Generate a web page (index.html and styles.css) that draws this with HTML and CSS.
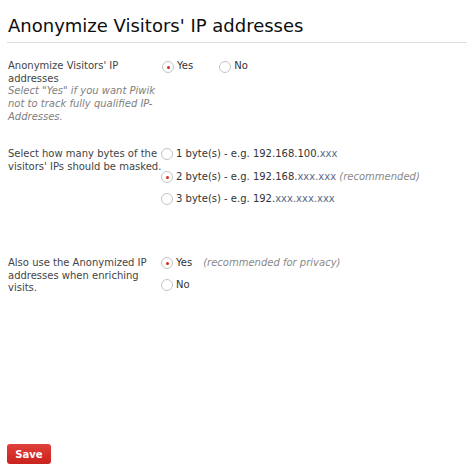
FILE: index.html
```html
<!DOCTYPE html>
<html lang="en">
<head>
  <meta charset="UTF-8">
  <title>Privacy Settings</title>
  <link rel="stylesheet" href="styles.css">
</head>
<body>

  <div class="privacy-box">
    <h2>Anonymize Visitors' IP addresses</h2>

    <div class="form-row">
      <div class="form-label">
        Anonymize Visitors' IP addresses
        <span class="form-help">Select "Yes" if you want Piwik not to track fully qualified IP-Addresses.</span>
      </div>
      <div class="form-field inline">
        <label class="radio"><span class="dot checked"></span>Yes</label>
        <label class="radio"><span class="dot"></span>No</label>
      </div>
    </div>

    <div class="form-row bytes">
      <div class="form-label">Select how many bytes of the visitors' IPs should be masked.</div>
      <div class="form-field">
        <label class="radio"><span class="dot"></span>1 byte(s) - e.g. 192.168.100.<span class="masked">xxx</span></label>
        <label class="radio"><span class="dot checked"></span>2 byte(s) - e.g. 192.168.<span class="masked">xxx.xxx</span>&nbsp;<em class="hint">(recommended)</em></label>
        <label class="radio"><span class="dot"></span>3 byte(s) - e.g. 192.<span class="masked">xxx.xxx.xxx</span></label>
      </div>
    </div>

    <div class="form-row enrich">
      <div class="form-label">Also use the Anonymized IP addresses when enriching visits.</div>
      <div class="form-field">
        <label class="radio"><span class="dot checked"></span>Yes <em class="hint note">(recommended for privacy)</em></label>
        <label class="radio"><span class="dot"></span>No</label>
      </div>
    </div>

    <button class="btn-save">Save</button>
  </div>

</body>
</html>
```

FILE: styles.css
```css
body {
  margin: 0;
  background: #fff;
  font-family: "DejaVu Sans", Verdana, sans-serif;
  font-size: 10px;
  color: #444;
}
.privacy-box {
  padding: 0 0 0 7px;
}
.privacy-box h2 {
  margin: 15px 0 0;
  padding: 0 0 5px 1px;
  font-size: 18px;
  font-weight: normal;
  color: #0d0d0d;
  line-height: 22px;
  border-bottom: 1px solid #ddd;
}
.form-row {
  display: grid;
  grid-template-columns: 154px 1fr;
  margin-top: 17px;
  line-height: 12.7px;
}
.form-row.bytes {
  margin-top: 24.4px;
}
.form-row.enrich {
  margin-top: 51px;
}
.form-label {
  padding-left: 1px;
  margin-right: -7px;
}
.form-help {
  display: block;
  font-style: italic;
  color: #808080;
}
.form-field {
  display: flex;
  flex-direction: column;
  gap: 9.5px;
}
.enrich .form-field {
  gap: 9px;
}
.form-field.inline {
  flex-direction: row;
  gap: 26px;
  padding-left: 1px;
}
.radio {
  display: flex;
  align-items: center;
  height: 13px;
  color: #333;
}
.dot {
  box-sizing: border-box;
  width: 12px;
  height: 12px;
  margin-right: 3px;
  border: 1px solid #c4c4c4;
  border-radius: 50%;
  background: #fff;
  position: relative;
}
.dot.checked::after {
  content: "";
  position: absolute;
  left: 4px;
  top: 4px;
  width: 3px;
  height: 3px;
  border-radius: 50%;
  background: #d4291f;
}
.masked {
  color: #5c6a86;
}
.hint {
  color: #888;
}
.hint.note {
  margin-left: 11px;
}
.btn-save {
  display: block;
  margin-top: 149px;
  width: 44px;
  height: 20px;
  padding: 0;
  border: none;
  border-radius: 3px;
  background: linear-gradient(#e0403a, #c9231c);
  color: #fff;
  font-family: "DejaVu Sans", Verdana, sans-serif;
  font-size: 10px;
  font-weight: bold;
}
```
